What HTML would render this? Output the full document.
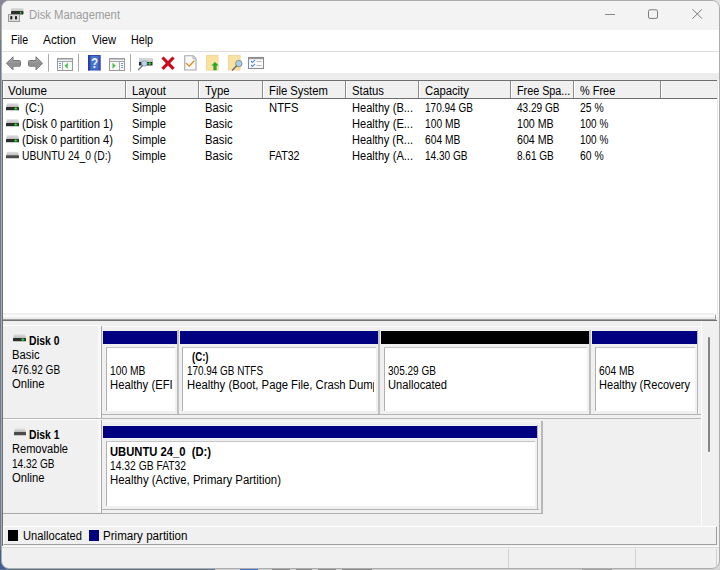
<!DOCTYPE html>
<html><head><meta charset="utf-8">
<style>
*{margin:0;padding:0;box-sizing:border-box}
html,body{width:720px;height:570px;overflow:hidden;background:#6f7e92;font-family:"Liberation Sans",sans-serif;font-size:12px;color:#000}
.a{position:absolute}
.t{position:absolute;white-space:pre;line-height:16px;transform-origin:0 0}
</style></head><body>
<div class="a" style="left:0px;top:0px;width:720px;height:570px;background:#637b93;"></div>
<div class="a" style="left:0px;top:0px;width:40px;height:40px;background:#8a8592;"></div>
<div class="a" style="left:700px;top:0px;width:20px;height:14px;background:#e2e2e2;"></div>
<div class="a" style="left:719px;top:14px;width:1px;height:11px;background:#4a4a4a;"></div>
<div class="a" style="left:719px;top:30px;width:1px;height:3px;background:#606060;"></div>
<div class="a" style="left:0px;top:550px;width:20px;height:20px;background:#3f5f96;"></div>
<div class="a" style="left:700px;top:550px;width:20px;height:20px;background:#d8d8d8;"></div>
<div class="a" style="left:1px;top:0px;width:719px;height:569px;background:#f0f0f0;border:1px solid #acacac;border-radius:8px"></div>
<div class="a" style="left:2px;top:1px;width:717px;height:29px;background:#f3f3f3;border-radius:7px 7px 0 0"></div>
<div class="t" style="left:29.00px;top:7px;transform:scaleX(0.9411);color:#9c9c9c;">Disk Management</div>
<div class="a" style="left:2px;top:30px;width:717px;height:21px;background:#fff;"></div>
<div class="t" style="left:11.00px;top:32px;transform:scaleX(0.8808);">File</div>
<div class="t" style="left:43.00px;top:32px;transform:scaleX(0.9880);">Action</div>
<div class="t" style="left:92.00px;top:32px;transform:scaleX(0.9302);">View</div>
<div class="t" style="left:131.00px;top:32px;transform:scaleX(0.8907);">Help</div>
<div class="a" style="left:2px;top:51px;width:717px;height:1px;background:#dedede;"></div>
<div class="a" style="left:2px;top:52px;width:717px;height:21px;background:#fff;"></div>
<div class="a" style="left:2px;top:73px;width:717px;height:7px;background:#ececec;"></div>
<div class="a" style="left:2px;top:80px;width:715px;height:1px;background:#6e6e6e;"></div>
<div class="a" style="left:3px;top:81px;width:714px;height:17px;background:#f0f0f0;"></div>
<div class="a" style="left:3px;top:81px;width:1px;height:17px;background:#fff;"></div>
<div class="a" style="left:2px;top:98px;width:715px;height:1px;background:#6e6e6e;"></div>
<div class="a" style="left:125px;top:81px;width:1px;height:17px;background:#8c8c8c;"></div>
<div class="a" style="left:126px;top:81px;width:1px;height:17px;background:#fff;"></div>
<div class="a" style="left:198px;top:81px;width:1px;height:17px;background:#8c8c8c;"></div>
<div class="a" style="left:199px;top:81px;width:1px;height:17px;background:#fff;"></div>
<div class="a" style="left:262px;top:81px;width:1px;height:17px;background:#8c8c8c;"></div>
<div class="a" style="left:263px;top:81px;width:1px;height:17px;background:#fff;"></div>
<div class="a" style="left:345px;top:81px;width:1px;height:17px;background:#8c8c8c;"></div>
<div class="a" style="left:346px;top:81px;width:1px;height:17px;background:#fff;"></div>
<div class="a" style="left:418px;top:81px;width:1px;height:17px;background:#8c8c8c;"></div>
<div class="a" style="left:419px;top:81px;width:1px;height:17px;background:#fff;"></div>
<div class="a" style="left:510px;top:81px;width:1px;height:17px;background:#8c8c8c;"></div>
<div class="a" style="left:511px;top:81px;width:1px;height:17px;background:#fff;"></div>
<div class="a" style="left:573px;top:81px;width:1px;height:17px;background:#8c8c8c;"></div>
<div class="a" style="left:574px;top:81px;width:1px;height:17px;background:#fff;"></div>
<div class="a" style="left:660px;top:81px;width:1px;height:17px;background:#8c8c8c;"></div>
<div class="a" style="left:661px;top:81px;width:1px;height:17px;background:#fff;"></div>
<div class="t" style="left:8.00px;top:83px;transform:scaleX(0.9750);">Volume</div>
<div class="t" style="left:132.00px;top:83px;transform:scaleX(0.9400);">Layout</div>
<div class="t" style="left:205.00px;top:83px;transform:scaleX(0.9400);">Type</div>
<div class="t" style="left:269.00px;top:83px;transform:scaleX(0.9400);">File System</div>
<div class="t" style="left:352.00px;top:83px;transform:scaleX(0.9400);">Status</div>
<div class="t" style="left:425.00px;top:83px;transform:scaleX(0.9400);">Capacity</div>
<div class="t" style="left:517.00px;top:83px;transform:scaleX(0.8980);">Free Spa...</div>
<div class="t" style="left:580.00px;top:83px;transform:scaleX(0.9120);">% Free</div>
<div class="a" style="left:2px;top:99px;width:715px;height:214px;background:#fff;"></div>
<div class="a" style="left:717px;top:80px;width:1px;height:233px;background:#e6e6e6;"></div>
<div class="a" style="left:718px;top:80px;width:1px;height:233px;background:#fff;"></div>
<div class="t" style="left:25.00px;top:100px;transform:scaleX(0.9400);">(C:)</div>
<div class="t" style="left:132.00px;top:100px;transform:scaleX(0.9264);">Simple</div>
<div class="t" style="left:205.00px;top:100px;transform:scaleX(0.9400);">Basic</div>
<div class="t" style="left:269.00px;top:100px;transform:scaleX(0.9400);">NTFS</div>
<div class="t" style="left:352.00px;top:100px;transform:scaleX(0.9242);">Healthy (B...</div>
<div class="t" style="left:425.00px;top:100px;transform:scaleX(0.8350);">170.94 GB</div>
<div class="t" style="left:517.00px;top:100px;transform:scaleX(0.8383);">43.29 GB</div>
<div class="t" style="left:580.00px;top:100px;transform:scaleX(0.8650);">25 %</div>
<div class="t" style="left:22.00px;top:116px;transform:scaleX(0.9343);">(Disk 0 partition 1)</div>
<div class="t" style="left:132.00px;top:116px;transform:scaleX(0.9264);">Simple</div>
<div class="t" style="left:205.00px;top:116px;transform:scaleX(0.9400);">Basic</div>
<div class="t" style="left:352.00px;top:116px;transform:scaleX(0.9242);">Healthy (E...</div>
<div class="t" style="left:425.00px;top:116px;transform:scaleX(0.8527);">100 MB</div>
<div class="t" style="left:517.00px;top:116px;transform:scaleX(0.8865);">100 MB</div>
<div class="t" style="left:580.00px;top:116px;transform:scaleX(0.8324);">100 %</div>
<div class="t" style="left:22.00px;top:132px;transform:scaleX(0.9343);">(Disk 0 partition 4)</div>
<div class="t" style="left:132.00px;top:132px;transform:scaleX(0.9264);">Simple</div>
<div class="t" style="left:205.00px;top:132px;transform:scaleX(0.9400);">Basic</div>
<div class="t" style="left:352.00px;top:132px;transform:scaleX(0.9145);">Healthy (R...</div>
<div class="t" style="left:425.00px;top:132px;transform:scaleX(0.8527);">604 MB</div>
<div class="t" style="left:517.00px;top:132px;transform:scaleX(0.8865);">604 MB</div>
<div class="t" style="left:580.00px;top:132px;transform:scaleX(0.8324);">100 %</div>
<div class="t" style="left:22.00px;top:148px;transform:scaleX(0.8607);">UBUNTU 24_0 (D:)</div>
<div class="t" style="left:132.00px;top:148px;transform:scaleX(0.9264);">Simple</div>
<div class="t" style="left:205.00px;top:148px;transform:scaleX(0.9400);">Basic</div>
<div class="t" style="left:269.00px;top:148px;transform:scaleX(0.8840);">FAT32</div>
<div class="t" style="left:352.00px;top:148px;transform:scaleX(0.9242);">Healthy (A...</div>
<div class="t" style="left:425.00px;top:148px;transform:scaleX(0.8400);">14.30 GB</div>
<div class="t" style="left:517.00px;top:148px;transform:scaleX(0.8341);">8.61 GB</div>
<div class="t" style="left:580.00px;top:148px;transform:scaleX(0.8650);">60 %</div>
<div class="a" style="left:2px;top:313px;width:716px;height:2px;background:#f0f0f0;"></div>
<div class="a" style="left:2px;top:315px;width:716px;height:2px;background:#fbfbfb;"></div>
<div class="a" style="left:2px;top:317px;width:716px;height:2px;background:#ececec;"></div>
<div class="a" style="left:2px;top:319px;width:714px;height:1px;background:#a0a0a0;"></div>
<div class="a" style="left:2px;top:320px;width:715px;height:1px;background:#737373;"></div>
<div class="a" style="left:715px;top:315px;width:1px;height:5px;background:#a0a0a0;"></div>
<div class="a" style="left:2px;top:321px;width:716px;height:205px;background:#f0f0f0;"></div>
<div class="a" style="left:3px;top:325px;width:98px;height:1px;background:#fff;"></div>
<div class="a" style="left:98px;top:325px;width:3px;height:93px;background:#f8f8f8;"></div>
<div class="a" style="left:101px;top:326px;width:1px;height:92px;background:#a9a9a9;"></div>
<div class="a" style="left:3px;top:419px;width:98px;height:1px;background:#fff;"></div>
<div class="a" style="left:98px;top:419px;width:3px;height:93px;background:#f8f8f8;"></div>
<div class="a" style="left:101px;top:420px;width:1px;height:93px;background:#a9a9a9;"></div>
<div class="a" style="left:3px;top:418px;width:698px;height:1px;background:#b8b8b8;"></div>
<div class="a" style="left:102px;top:326px;width:599px;height:1px;background:#fafafa;"></div>
<div class="a" style="left:701px;top:321px;width:1px;height:205px;background:#fcfcfc;"></div>
<div class="a" style="left:3px;top:513px;width:99px;height:1px;background:#a8a8a8;"></div>
<div class="t" style="left:29.00px;top:333px;transform:scaleX(0.8616);font-weight:bold;">Disk 0</div>
<div class="t" style="left:12.00px;top:347px;transform:scaleX(0.9400);">Basic</div>
<div class="t" style="left:12.00px;top:362px;transform:scaleX(0.8397);">476.92 GB</div>
<div class="t" style="left:12.00px;top:376px;transform:scaleX(0.9400);">Online</div>
<div class="t" style="left:29.00px;top:427px;transform:scaleX(0.8616);font-weight:bold;">Disk 1</div>
<div class="t" style="left:12.00px;top:441px;transform:scaleX(0.9226);">Removable</div>
<div class="t" style="left:12.00px;top:456px;transform:scaleX(0.8400);">14.32 GB</div>
<div class="t" style="left:12.00px;top:470px;transform:scaleX(0.9400);">Online</div>
<div class="a" style="left:103px;top:331px;width:74px;height:13px;background:#000080;"></div>
<div class="a" style="left:177px;top:330px;width:2px;height:84px;background:#c0c0c0;"></div>
<div class="a" style="left:106px;top:347px;width:69px;height:64px;background:#fff;border-top:1px solid #c4c4c4;border-left:1px solid #b0b0b0"></div>
<div class="a" style="left:180px;top:331px;width:198px;height:13px;background:#000080;"></div>
<div class="a" style="left:378px;top:330px;width:2px;height:84px;background:#c0c0c0;"></div>
<div class="a" style="left:182px;top:347px;width:194px;height:64px;background:#fff;border-top:1px solid #c4c4c4;border-left:1px solid #b0b0b0"></div>
<div class="a" style="left:102px;top:414px;width:599px;height:1px;background:#b4b4b4;"></div>
<div class="a" style="left:381px;top:331px;width:208px;height:13px;background:#000000;"></div>
<div class="a" style="left:589px;top:330px;width:2px;height:84px;background:#c0c0c0;"></div>
<div class="a" style="left:384px;top:347px;width:203px;height:64px;background:#fff;border-top:1px solid #c4c4c4;border-left:1px solid #b0b0b0"></div>
<div class="a" style="left:592px;top:331px;width:105px;height:13px;background:#000080;"></div>
<div class="a" style="left:697px;top:330px;width:1px;height:84px;background:#b8b8b8;"></div>
<div class="a" style="left:595px;top:347px;width:100px;height:64px;background:#fff;border-top:1px solid #c4c4c4;border-left:1px solid #b0b0b0"></div>
<div class="t" style="left:110.00px;top:363px;transform:scaleX(0.8575);">100 MB</div>
<div class="t" style="left:110.00px;top:377px;transform:scaleX(0.9400);width:68.1px;overflow:hidden;">Healthy (EFI</div>
<div class="t" style="left:192.00px;top:349px;transform:scaleX(0.8019);font-weight:bold;">(C:)</div>
<div class="t" style="left:187.00px;top:363px;transform:scaleX(0.8261);">170.94 GB NTFS</div>
<div class="t" style="left:187.00px;top:377px;transform:scaleX(0.9400);width:198.9px;overflow:hidden;">Healthy (Boot, Page File, Crash Dump</div>
<div class="t" style="left:388.00px;top:363px;transform:scaleX(0.8350);">305.29 GB</div>
<div class="t" style="left:388.00px;top:377px;transform:scaleX(0.9306);">Unallocated</div>
<div class="t" style="left:599.00px;top:363px;transform:scaleX(0.8527);">604 MB</div>
<div class="t" style="left:599.00px;top:377px;transform:scaleX(0.9220);">Healthy (Recovery</div>
<div class="a" style="left:102px;top:421px;width:440px;height:1px;background:#fafafa;"></div>
<div class="a" style="left:541px;top:421px;width:2px;height:93px;background:#b8b8b8;"></div>
<div class="a" style="left:102px;top:513px;width:441px;height:1px;background:#b0b0b0;"></div>
<div class="a" style="left:103px;top:426px;width:434px;height:12px;background:#000080;"></div>
<div class="a" style="left:537px;top:425px;width:1px;height:84px;background:#b8b8b8;"></div>
<div class="a" style="left:106px;top:441px;width:429px;height:65px;background:#fff;border-top:1px solid #c4c4c4;border-left:1px solid #b0b0b0"></div>
<div class="a" style="left:102px;top:509px;width:437px;height:1px;background:#b4b4b4;"></div>
<div class="t" style="left:110.00px;top:444px;transform:scaleX(0.9352);font-weight:bold;">UBUNTU 24_0  (D:)</div>
<div class="t" style="left:110.00px;top:458px;transform:scaleX(0.8588);">14.32 GB FAT32</div>
<div class="t" style="left:110.00px;top:472px;transform:scaleX(0.9495);">Healthy (Active, Primary Partition)</div>
<div class="a" style="left:708px;top:337px;width:2px;height:115px;background:#858585;border-radius:1px"></div>
<div class="a" style="left:3px;top:526px;width:714px;height:19px;background:#f0f0f0;border-top:1px solid #fff;border-left:1px solid #fff;border-bottom:1px solid #a0a0a0;border-right:1px solid #a0a0a0"></div>
<div class="a" style="left:8px;top:530px;width:10px;height:11px;background:#000;"></div>
<div class="t" style="left:23.00px;top:528px;transform:scaleX(0.9306);">Unallocated</div>
<div class="a" style="left:89px;top:530px;width:10px;height:11px;background:#000080;"></div>
<div class="t" style="left:103.00px;top:528px;transform:scaleX(0.9657);">Primary partition</div>
<div class="a" style="left:2px;top:546px;width:717px;height:1px;background:#fafafa;"></div>
<div class="a" style="left:2px;top:547px;width:717px;height:1px;background:#dadada;"></div>
<div class="a" style="left:508px;top:549px;width:1px;height:19px;background:#d0d0d0;"></div>
<div class="a" style="left:635px;top:549px;width:1px;height:19px;background:#d0d0d0;"></div>
<div class="a" style="left:716px;top:549px;width:1px;height:19px;background:#d0d0d0;"></div>
<div class="a" style="left:2px;top:80px;width:1px;height:466px;background:#707070;"></div>
<svg class="a" style="left:0;top:0" width="720" height="570" viewBox="0 0 720 570" shape-rendering="geometricPrecision">
<defs>
 <linearGradient id="gArrow" x1="0" y1="0" x2="0" y2="1"><stop offset="0" stop-color="#b4b4b4"/><stop offset="0.55" stop-color="#8e8e8e"/><stop offset="1" stop-color="#a4a4a4"/></linearGradient>
 <linearGradient id="gDrv" x1="0" y1="0" x2="0" y2="1"><stop offset="0" stop-color="#e0e0e0"/><stop offset="1" stop-color="#bcbcbc"/></linearGradient>
 <linearGradient id="gHelp" x1="0" y1="0" x2="1" y2="1"><stop offset="0" stop-color="#2c4ea8"/><stop offset="0.5" stop-color="#4a74cc"/><stop offset="1" stop-color="#2c50a8"/></linearGradient>
</defs>
<!-- title icon -->
<rect x="11" y="8" width="12.5" height="3.5" rx="1" fill="url(#gDrv)"/>
<rect x="11" y="11" width="12.5" height="3.5" rx="0.8" fill="#2e2e2e"/>
<rect x="20" y="11.8" width="1.4" height="2" fill="#2fd02f"/>
<rect x="8.5" y="14.5" width="11" height="7" fill="#dcdcdc" stroke="#9a9a9a" stroke-width="1"/>
<rect x="10.3" y="16" width="2" height="3.5" rx="0.8" fill="#202020"/>
<rect x="15" y="16" width="2" height="3.5" rx="0.8" fill="#202020"/>
<!-- window controls -->
<rect x="605" y="14" width="10" height="1" fill="#8a8a8a"/>
<rect x="648.5" y="9.8" width="9" height="8.6" rx="1.5" fill="none" stroke="#7a7a7a" stroke-width="1"/>
<path d="M692.5 9.2 L702 18.7 M702 9.2 L692.5 18.7" stroke="#7a7a7a" stroke-width="1" fill="none"/>

<!-- toolbar: back/forward -->
<path d="M6.5 63.3 L13 56.8 L13 60.5 L19.5 60.5 Q20.5 60.5 20.5 61.5 L20.5 65.2 Q20.5 66.2 19.5 66.2 L13 66.2 L13 69.8 Z" fill="url(#gArrow)" stroke="#777" stroke-width="1" stroke-linejoin="round"/>
<path d="M42.5 63.3 L36 56.8 L36 60.5 L29.5 60.5 Q28.5 60.5 28.5 61.5 L28.5 65.2 Q28.5 66.2 29.5 66.2 L36 66.2 L36 69.8 Z" fill="url(#gArrow)" stroke="#777" stroke-width="1" stroke-linejoin="round"/>
<rect x="48" y="54" width="1" height="17.5" fill="#a8a8a8"/>
<!-- console tree icon (left) -->
<rect x="57.5" y="58.5" width="15" height="12" fill="#f6f6f6" stroke="#9a9a9a" stroke-width="1"/>
<rect x="58" y="59" width="14" height="1" fill="#c4c8d0"/>
<rect x="58" y="60" width="14" height="1" fill="#eef0f4"/>
<rect x="58" y="61" width="14" height="1" fill="#a8a8a8"/>
<rect x="62" y="62" width="1" height="8" fill="#a8a8a8"/>
<rect x="59" y="63" width="2" height="1" fill="#6a9ad8"/><rect x="59" y="65" width="2" height="1" fill="#6a9ad8"/><rect x="59" y="67" width="2" height="1" fill="#6a9ad8"/>
<path d="M64.5 65.8 L67.8 62.8 L67.8 68.8 Z" fill="#4cc04c"/>
<rect x="78" y="54" width="1" height="17.5" fill="#a8a8a8"/>
<!-- help -->
<rect x="88" y="55" width="12.5" height="15.5" fill="#2e4cb0"/>
<rect x="90.5" y="56" width="8" height="13.5" fill="#4a7ad4" opacity="0.85"/>
<rect x="88" y="55" width="1.5" height="15.5" fill="#2a3a98"/>
<rect x="99.2" y="55" width="1.3" height="15.5" fill="#3a50b8"/>
<text x="0" y="0" transform="translate(94.6 68.2) scale(0.78 1)" font-family="Liberation Sans" font-weight="bold" font-size="15" fill="#e8f0ff" text-anchor="middle">?</text>
<!-- console tree icon (right) -->
<rect x="109.5" y="58.5" width="15" height="12" fill="#f6f6f6" stroke="#9a9a9a" stroke-width="1"/>
<rect x="110" y="59" width="14" height="1" fill="#c4c8d0"/>
<rect x="110" y="60" width="14" height="1" fill="#eef0f4"/>
<rect x="110" y="61" width="14" height="1" fill="#a8a8a8"/>
<rect x="119" y="62" width="1" height="8" fill="#a8a8a8"/>
<rect x="121" y="63" width="2" height="1" fill="#6a9ad8"/><rect x="121" y="65" width="2" height="1" fill="#6a9ad8"/><rect x="121" y="67" width="2" height="1" fill="#6a9ad8"/>
<path d="M115.8 65.8 L112.5 62.8 L112.5 68.8 Z" fill="#4cc04c"/>
<rect x="130" y="54" width="1" height="17.5" fill="#a8a8a8"/>
<!-- connect drive w/ magnifier -->
<rect x="139.5" y="58.5" width="13" height="4" fill="url(#gDrv)" stroke="#c0c0c0" stroke-width="0.6"/>
<rect x="139" y="62" width="13.5" height="3.5" fill="#2a2a2a"/>
<path d="M148 63.75 h3.4 M149.7 62 v3.5" stroke="#2ad02a" stroke-width="1.2"/>
<circle cx="144.3" cy="63.5" r="2.8" fill="#b8d4ec" stroke="#8aa0b8" stroke-width="0.8"/>
<path d="M142.3 65.8 L138.5 69.8" stroke="#7a7a7a" stroke-width="1.4" stroke-linecap="round"/>
<!-- red X -->
<path d="M162.5 57.5 L173.5 68.8 M173.5 57.5 L162.5 68.8" stroke="#cc0a1e" stroke-width="3.2" stroke-linecap="butt"/>
<!-- doc w/ check -->
<path d="M184.7 55.7 L193 55.7 L196 58.7 L196 70 L184.7 70 Z" fill="#f8f8f8" stroke="#a8a8a8" stroke-width="1.1" stroke-linejoin="round"/>
<path d="M193 55.7 L193 58.7 L196 58.7" fill="#d8d8d8" stroke="#a0a0a0" stroke-width="0.8"/>
<path d="M186.3 63.5 L189.3 66 L194 61" stroke="#e0902a" stroke-width="1.3" fill="none" stroke-linecap="round"/>
<!-- yellow doc w/ up arrow -->
<rect x="206" y="55" width="12.5" height="15.5" fill="#f9e2a0"/>
<rect x="206.5" y="55.5" width="11.5" height="14.5" fill="none" stroke="#e8b0a0" stroke-width="0.7" stroke-dasharray="0.8 1.4"/>
<path d="M215 62 L218.7 65.6 L216.6 65.6 L216.6 70.3 L213.4 70.3 L213.4 65.6 L211.3 65.6 Z" fill="#2aa82a"/>
<!-- yellow doc w/ magnifier -->
<rect x="228" y="55" width="12.5" height="15.5" fill="#f9e2a0"/>
<rect x="228.5" y="55.5" width="11.5" height="14.5" fill="none" stroke="#e8b0a0" stroke-width="0.7" stroke-dasharray="0.8 1.4"/>
<circle cx="238.8" cy="63.6" r="3.2" fill="#a8d0e8" stroke="#8a8a8a" stroke-width="1"/>
<path d="M236.5 66 L232.5 70" stroke="#6a6a6a" stroke-width="1.4" stroke-linecap="round"/>
<!-- checklist -->
<rect x="248.5" y="57.5" width="15" height="11" fill="#fcfcfc" stroke="#8c8c8c" stroke-width="1.1"/>
<rect x="249" y="58" width="14" height="1.2" fill="#9a9a9a"/>
<path d="M251 61 L252.5 62.5 L255 59.8 M251 65 L252.5 66.5 L255 63.8" stroke="#4a8ae0" stroke-width="1.1" fill="none"/>
<path d="M256.5 61.5 h5 M256.5 65.5 h5" stroke="#b0b0b0" stroke-width="0.9"/>

<!-- list row icons -->
<g id="drv0">
<path d="M7 103.2 L18 103.2 L19 107 L6 107 Z" fill="url(#gDrv)"/>
<rect x="6" y="107" width="13" height="3.2" rx="0.5" fill="#2c2c2c"/>
<path d="M14.2 108.6 h3.2 M15.8 107.1 v3" stroke="#2ad02a" stroke-width="1.1"/>
</g>
<use href="#drv0" y="16"/>
<use href="#drv0" y="32"/>
<path d="M7 151.8 L18 151.8 L19 155.3 L6 155.3 Z" fill="url(#gDrv)"/>
<rect x="6" y="155.3" width="13" height="3" rx="0.5" fill="#4a4a4a"/>
<!-- disk label icons -->
<use href="#drv0" x="7" y="231"/>
<path d="M15 428.6 L25 428.6 L26 432 L14 432 Z" fill="url(#gDrv)"/>
<rect x="14" y="432" width="12" height="3.2" rx="0.5" fill="#4a4a4a"/>
</svg>

<div class="a" style="left:0px;top:569px;width:215px;height:1px;background:#5f7890;"></div>
<div class="a" style="left:215px;top:569px;width:505px;height:1px;background:#d4d4d4;"></div>
<div class="a" style="left:240px;top:569px;width:18px;height:1px;background:#4a78c0;"></div>
<div class="a" style="left:272px;top:569px;width:18px;height:1px;background:#8a8a8a;"></div>
<div class="a" style="left:296px;top:569px;width:16px;height:1px;background:#8a8a8a;"></div>
<div class="a" style="left:318px;top:569px;width:18px;height:1px;background:#8a8a8a;"></div>
<div class="a" style="left:342px;top:569px;width:30px;height:1px;background:#8a8a8a;"></div>
<div class="a" style="left:582px;top:569px;width:30px;height:1px;background:#a0a0a0;"></div>
</body></html>
